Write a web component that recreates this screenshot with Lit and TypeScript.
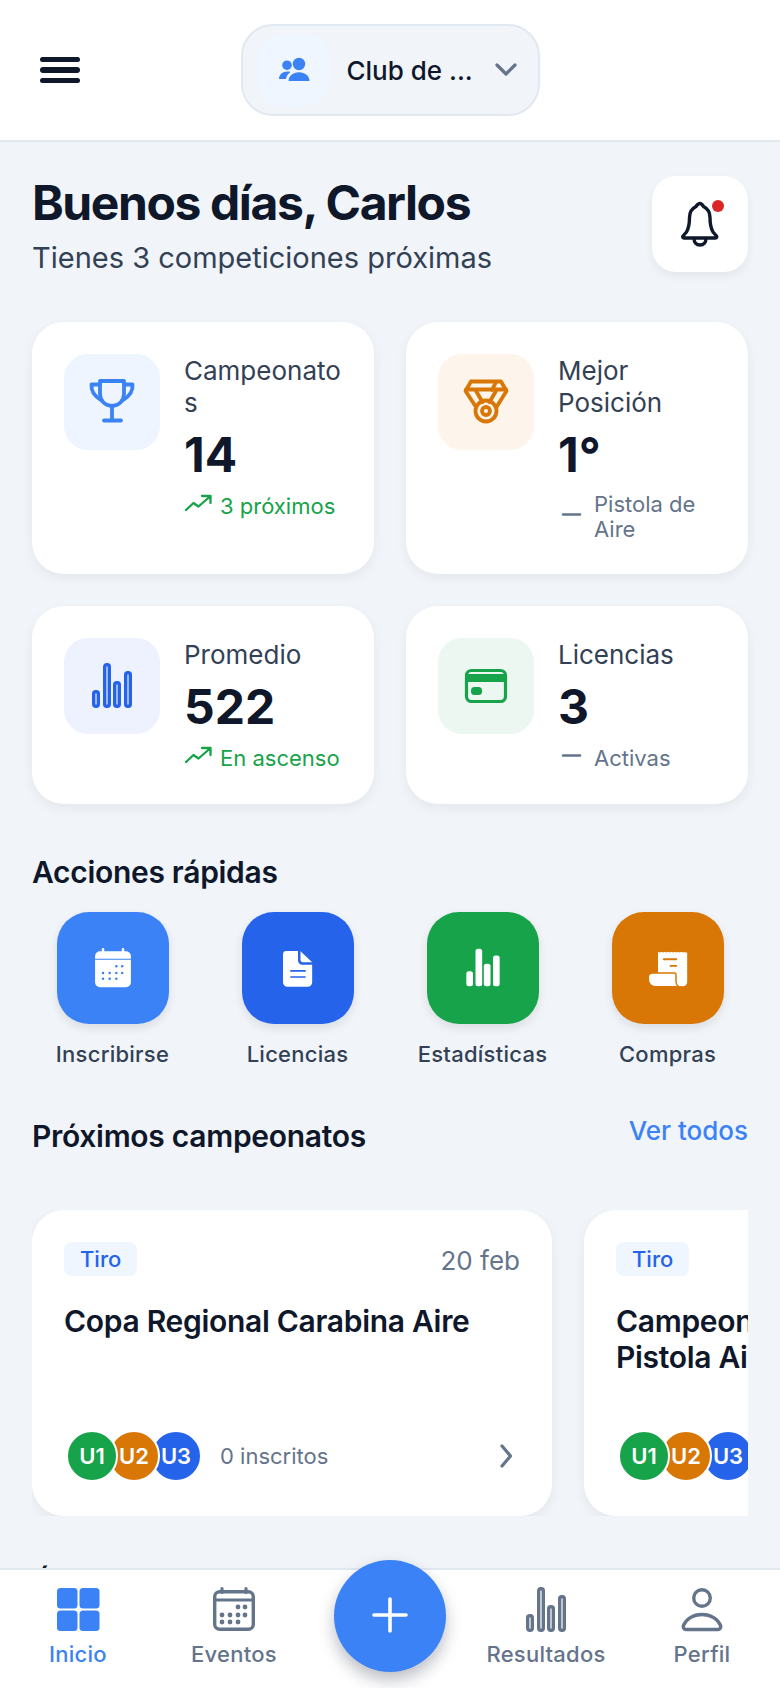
import { LitElement, html, css, svg } from "lit";
import { customElement } from "lit/decorators.js";

const box = (size: number, content: unknown) =>
  html`<svg class="ic" width=${size} height=${size} viewBox="0 0 48 48" aria-hidden="true">${content}</svg>`;

const barRects = [
  [4, 28, 8, 18],
  [15, 1, 8, 45],
  [25, 19, 8, 27],
  [36, 9, 8, 37],
];
const barsLine = (size: number) =>
  box(size, svg`${barRects.map(([x, y, w, h]) => svg`<rect x=${x + 1.7} y=${y + 1.7} width=${w - 3.4} height=${h - 3.4} rx="2" fill="none" stroke="currentColor" stroke-width="3.4"/>`)}`);
const barsFill = (size: number) =>
  box(size, svg`${barRects.map(([x, y, w, h]) => svg`<rect x=${x} y=${y} width=${w} height=${h} rx="3" fill="#fff"/>`)}`);

const calDots = [[28, 21], [35, 21], [12, 29], [20, 29], [28, 29], [35, 29], [12, 36], [20, 36], [28, 36]];
const calLine = (size: number) =>
  box(size, svg`
    <rect x="4.7" y="5.7" width="38.6" height="37.6" rx="5" fill="none" stroke="currentColor" stroke-width="3.4"/>
    <path d="M4 14h40" stroke="currentColor" stroke-width="3"/>
    <path d="M12 2.5v4M36 2.5v4" stroke="currentColor" stroke-width="3.2" stroke-linecap="round"/>
    ${calDots.map(([x, y]) => svg`<circle cx=${x} cy=${y} r="2.4" fill="currentColor"/>`)}`);
const calFill = (size: number) =>
  box(size, svg`
    <rect x="2.5" y="4" width="43" height="43" rx="6" fill="#fff"/>
    <path d="M2.5 13.5h43" stroke="currentColor" stroke-width="1.4"/>
    <path d="M12 1.5v4M36 1.5v4" stroke="#fff" stroke-width="3" stroke-linecap="round"/>
    ${calDots.map(([x, y]) => svg`<circle cx=${x} cy=${y + 1} r="1.5" fill="currentColor"/>`)}`);

const trophy = box(48, svg`<g fill="none" stroke="currentColor" stroke-width="3.8" stroke-linecap="round" stroke-linejoin="round">
  <path d="M12 3h24v13a12 12 0 0 1-24 0z"/>
  <path d="M12 6.5H3.5c-.5 6 2.5 11.500 9.500 15.500M36 6.500h8.500c.5 6-2.500 11.500-9.500 15.500"/>
  <path d="M24 28v13M16 42.500h17"/></g>`);
const medal = box(48, svg`<g fill="none" stroke="currentColor" stroke-width="3.8" stroke-linejoin="round" stroke-linecap="round">
  <path d="M9 3.500h30l5.500 9.500-10 16M14 29 3.500 13 9 3.500"/>
  <path d="M4 11.500h40M34 4l-4 8M14 13l6.500 11M34 13l-6.500 11"/>
  <circle cx="24" cy="33" r="10.500"/><circle cx="24" cy="33" r="4"/></g>`);
const cardIcon = box(48, svg`
  <rect x="4.500" y="8.500" width="39" height="31" rx="5" fill="none" stroke="currentColor" stroke-width="3.2"/>
  <rect x="4" y="12" width="40" height="8" fill="currentColor"/>
  <rect x="9" y="25" width="11" height="8" rx="3.500" fill="currentColor"/>`);
const trend = html`<svg class="ic" width="28" height="28" viewBox="0 0 28 28" aria-hidden="true"><path d="M2 18l7.500-7 5 3.500L26 4.500M18 4h8.500v7" fill="none" stroke="currentColor" stroke-width="2.3" stroke-linecap="round" stroke-linejoin="round"/></svg>`;
const dash = html`<svg class="ic" width="28" height="28" viewBox="0 0 28 28" aria-hidden="true"><path d="M5 11.500h17" stroke="currentColor" stroke-width="2.5" stroke-linecap="round"/></svg>`;
const doc = box(40, svg`
  <path d="M10 3.500h14V15a5 5 0 0 0 5 5h12v21a5.500 5.500 0 0 1-5.500 5.500h-24A5.500 5.500 0 0 1 6 41V7.500a4 4 0 0 1 4-4z" fill="#fff"/>
  <path d="M27 4l14 13H30a3 3 0 0 1-3-3z" fill="#fff"/>
  <path d="M15.500 27.500h17M15.500 34.800h17" stroke="currentColor" stroke-width="2" stroke-linecap="round"/>`);
const receipt = box(40, svg`
  <path d="M12 4.500l2 1.500 2-1.500 2 1.500 2-1.500 2 1.500 2-1.500 2 1.500 2-1.500 2 1.500 2-1.500 2 1.500 2-1.500 2 1.500 2-1.500 2 1.500 2-1.500V41a5 5 0 0 1-10 0V12H12z" fill="#fff"/>
  <path d="M12 5.500h35V41a5 5 0 0 1-10 0v-10H12z" fill="#fff"/>
  <path d="M5 30h27c1 0 1.500.5 1.500 2v8c0 2 1 4.500 2.500 6.500H10c-5 0-9.500-3-9.500-8V34c0-2 2.500-4 4.500-4z" fill="#fff" stroke="currentColor" stroke-width="1.6"/>
  <path d="M19 13.500h15M27 21.500h7" stroke="currentColor" stroke-width="2.2" stroke-linecap="round"/>`);
const grid = box(48, svg`
  <rect x="3" y="2" width="20.500" height="20.500" rx="3.500" fill="currentColor"/>
  <rect x="25.500" y="2" width="20" height="20.500" rx="3.500" fill="currentColor"/>
  <rect x="3" y="24.500" width="20.500" height="20.500" rx="3.500" fill="currentColor"/>
  <rect x="25.500" y="24.500" width="20" height="20.500" rx="3.500" fill="currentColor"/>`);
const person = box(48, svg`<g fill="none" stroke="currentColor" stroke-width="3.4" stroke-linejoin="round">
  <circle cx="24" cy="12" r="8.3"/>
  <path d="M8 43.500h32a2.800 2.800 0 0 0 2.600-3.800C40 33 33 28.500 24 28.500S8 33 5.400 39.700A2.800 2.800 0 0 0 8 43.500z"/></g>`);

type Stat = { label: string; value: string; note: string; up: boolean; tone: string; icon: unknown };
const stats: Stat[] = [
  { label: "Campeonatos", value: "14", note: "3 próximos", up: true, tone: "sky", icon: trophy },
  { label: "Mejor Posición", value: "1°", note: "Pistola de Aire", up: false, tone: "amber", icon: medal },
  { label: "Promedio", value: "522", note: "En ascenso", up: true, tone: "blue", icon: barsLine(48) },
  { label: "Licencias", value: "3", note: "Activas", up: false, tone: "green", icon: cardIcon },
];
const actions = [
  { label: "Inscribirse", tone: "a-sky", icon: calFill(40) },
  { label: "Licencias", tone: "a-blue", icon: doc },
  { label: "Estadísticas", tone: "a-green", icon: barsFill(40) },
  { label: "Compras", tone: "a-amber", icon: receipt },
];
const events = [
  { title: "Copa Regional Carabina Aire", date: "20 feb" },
  { title: "Campeonato Autonómico Pistola Aire", date: "5 mar" },
];
const avatars = [
  { t: "U1", c: "av-green" },
  { t: "U2", c: "av-amber" },
  { t: "U3", c: "av-blue" },
];

@customElement("app-root")
export class AppRoot extends LitElement {
  static styles = css`
    :host { display: block; width: 780px; height: 1688px; font-family: Inter, "Noto Sans", sans-serif; color: #0f172a; background: #f1f5f9; }
    * { box-sizing: border-box; }
    .ic { display: block; flex: none; }
    button { font: inherit; color: inherit; background: none; border: 0; padding: 0; margin: 0; }
    .page { position: relative; height: 1688px; display: flex; flex-direction: column; overflow: hidden; }

    .top { height: 142px; flex: none; background: #fff; border-bottom: 2px solid #e2e8f0; display: grid; grid-template-columns: 1fr auto 1fr; align-items: center; padding: 0 40px; }
    .burger { width: 40px; display: flex; flex-direction: column; gap: 5px; }
    .burger span { display: block; height: 5.5px; border-radius: 3px; background: #0f172a; }
    .club { width: 299px; height: 92px; display: flex; align-items: center; padding: 0 18px 0 15px; gap: 17px; background: #f1f5f9; border: 2px solid #e2e8f0; border-radius: 32px; }
    .club-ic { width: 72px; height: 72px; border-radius: 24px; background: #eff6ff; color: #3b82f6; display: flex; align-items: center; justify-content: center; flex: none; }
    .club-name { flex: 1; font-size: 26px; font-weight: 500; text-align: left; white-space: nowrap; }
    .chev { color: #64748b; }

    main { flex: 1; min-height: 0; overflow: hidden; padding: 32px 32px 0; }
    .hello { display: flex; justify-content: space-between; align-items: flex-start; }
    h1 { margin: 0; font-size: 48px; line-height: 58px; font-weight: 700; letter-spacing: -1.4px; }
    .sub { margin: 8px 0 0; font-size: 29px; line-height: 35px; color: #334155; }
    .bell { position: relative; width: 96px; height: 96px; margin-top: 2px; border-radius: 24px; background: #fff; box-shadow: 0 4px 10px rgba(15, 23, 42, .06); display: flex; align-items: center; justify-content: center; }
    .dot { position: absolute; left: 60px; top: 24px; width: 12px; height: 12px; border-radius: 50%; background: #dc2626; }

    .stats { display: grid; grid-template-columns: 1fr 1fr; gap: 32px; margin-top: 47px; }
    .stat { display: flex; gap: 24px; padding: 32px; border-radius: 32px; background: #fff; box-shadow: 0 4px 12px rgba(15, 23, 42, .06); min-width: 0; }
    .stat-ic { width: 96px; height: 96px; border-radius: 24px; flex: none; display: flex; align-items: center; justify-content: center; }
    .sky { background: #eff5fe; color: #3b82f6; }
    .amber { background: #fdf4eb; color: #d97706; }
    .blue { background: #edf2fe; color: #2563eb; }
    .green { background: #edf7f1; color: #16a34a; }
    .stat-body { min-width: 0; flex: 1; padding-top: 1px; }
    .stat-label { font-size: 26px; line-height: 32px; color: #334155; overflow-wrap: anywhere; }
    .stat-value { font-size: 48px; line-height: 58px; font-weight: 700; margin: 7px 0 8px; }
    .note { display: flex; align-items: center; gap: 8px; font-size: 22px; line-height: 25px; }
    .up { color: #16a34a; }
    .flat { color: #64748b; }

    h2 { margin: 0; font-size: 30px; line-height: 36px; font-weight: 600; letter-spacing: -0.3px; }
    .quick-title { margin-top: 50px; }
    .quick { display: grid; grid-template-columns: repeat(4, 1fr); margin: 22px -12px 0; }
    .act { display: flex; flex-direction: column; align-items: center; gap: 17px; }
    .act-btn { width: 112px; height: 112px; border-radius: 32px; display: flex; align-items: center; justify-content: center; box-shadow: 0 4px 10px rgba(15, 23, 42, .1); }
    .a-sky { background: #3b82f6; color: #3b82f6; }
    .a-blue { background: #2563eb; color: #2563eb; }
    .a-green { background: #16a34a; color: #16a34a; }
    .a-amber { background: #d97706; color: #d97706; }
    .act-label { font-size: 22px; line-height: 26px; font-weight: 500; color: #334155; letter-spacing: 0.25px; }

    .section { display: flex; justify-content: space-between; align-items: flex-start; margin-top: 51px; }
    .more { font-size: 26px; line-height: 32px; font-weight: 500; color: #3b82f6; margin-top: -3px; }
    .events { display: flex; gap: 32px; overflow: hidden; margin-top: 56px; }
    .event { flex: none; width: 520px; height: 306px; padding: 32px; border-radius: 32px; background: #fff; box-shadow: 0 4px 12px rgba(15, 23, 42, .06); display: flex; flex-direction: column; }
    .event-top { display: flex; justify-content: space-between; align-items: flex-start; }
    .badge { height: 34px; padding: 0 16px; border-radius: 8px; background: #eff6ff; color: #2563eb; font-size: 22px; line-height: 34px; font-weight: 500; }
    .date { font-size: 26px; line-height: 34px; color: #64748b; margin-top: 2px; }
    .event-title { margin: 25px 0 0; font-size: 30px; line-height: 36px; font-weight: 600; letter-spacing: -0.3px; }
    .event-foot { margin-top: auto; margin-bottom: 2px; display: flex; align-items: center; }
    .avs { display: flex; padding-left: 2px; }
    .av { position: relative; width: 52px; height: 52px; border-radius: 50%; border: 2px solid #fff; margin-right: -10px; display: flex; align-items: center; justify-content: center; color: #fff; font-size: 22px; font-weight: 600; }
    .av:nth-child(1) { z-index: 3; }
    .av:nth-child(2) { z-index: 2; }
    .av:nth-child(3) { z-index: 1; }
    .av-green { background: #16a34a; }
    .av-amber { background: #d97706; }
    .av-blue { background: #2563eb; }
    .count { margin-left: 28px; flex: 1; font-size: 22px; line-height: 26px; color: #64748b; }
    .go { color: #64748b; }
    .next { margin-top: 49px; }

    .nav { position: relative; flex: none; height: 120px; background: #fff; border-top: 2px solid #e2e8f0; display: grid; grid-template-columns: repeat(5, 1fr); padding-top: 16px; }
    .tab { display: flex; flex-direction: column; align-items: center; gap: 7px; color: #64748b; font-size: 22px; line-height: 26px; font-weight: 500; letter-spacing: 0.25px; }
    .tab.on { color: #3b82f6; }
    .fab { position: absolute; left: 334px; top: -10px; width: 112px; height: 112px; border-radius: 50%; background: #3b82f6; color: #fff; display: flex; align-items: center; justify-content: center; box-shadow: 0 8px 16px rgba(15, 23, 42, .28); }
  `;

  render() {
    return html`<div class="page">
      <header class="top">
        <button class="burger" aria-label="Menú"><span></span><span></span><span></span></button>
        <button class="club">
          <span class="club-ic">
            <svg class="ic" width="36" height="36" viewBox="0 0 36 36" aria-hidden="true" fill="currentColor">
              <circle cx="23" cy="12" r="6.2"/><circle cx="11" cy="13.2" r="4.8"/>
              <path d="M12.500 29c0-5 4.500-8.800 10.500-8.800S33.500 24 33.500 29z"/>
              <path d="M3 27c0-4.500 3.500-7.500 8.500-7.500 1 0 2 .1 3 .4-2.500 1.800-4 4-4.600 7.100z"/>
            </svg>
          </span>
          <span class="club-name">Club de ...</span>
          <svg class="ic chev" width="28" height="28" viewBox="0 0 28 28" aria-hidden="true"><path d="M5 9l9 9 9-9" fill="none" stroke="currentColor" stroke-width="3.2" stroke-linecap="round" stroke-linejoin="round"/></svg>
        </button>
        <span></span>
      </header>

      <main>
        <div class="hello">
          <div>
            <h1>Buenos días, Carlos</h1>
            <p class="sub">Tienes 3 competiciones próximas</p>
          </div>
          <button class="bell" aria-label="Notificaciones">
            <svg class="ic" width="48" height="48" viewBox="0 0 48 48" aria-hidden="true"><path d="M24 3.500c-2 0-3 1.500-4 3-4 2-6.500 6-6.500 11 0 7-1 11-3 14.500l-3.500 4c-.7 1 0 2 1 2h31.500c1 0 1.700-1 1-2l-3.500-4c-2-3.500-3-7.500-3-14.500 0-5-2.500-9-6.500-11-1-1.500-2-3-3.500-3zM18 38.500c0 4 2.500 6.500 6 6.500s6-2.500 6-6.500" fill="none" stroke="#0f172a" stroke-width="3.4" stroke-linejoin="round" stroke-linecap="round"/></svg>
            <span class="dot"></span>
          </button>
        </div>

        <section class="stats">
          ${stats.map(
            (s) => html`<article class="stat">
              <div class="stat-ic ${s.tone}">${s.icon}</div>
              <div class="stat-body">
                <div class="stat-label">${s.label}</div>
                <div class="stat-value">${s.value}</div>
                <div class="note ${s.up ? "up" : "flat"}">${s.up ? trend : dash}<span>${s.note}</span></div>
              </div>
            </article>`
          )}
        </section>

        <h2 class="quick-title">Acciones rápidas</h2>
        <section class="quick">
          ${actions.map(
            (a) => html`<button class="act">
              <span class="act-btn ${a.tone}">${a.icon}</span>
              <span class="act-label">${a.label}</span>
            </button>`
          )}
        </section>

        <div class="section"><h2>Próximos campeonatos</h2><span class="more">Ver todos</span></div>
        <section class="events">
          ${events.map(
            (e) => html`<article class="event">
              <div class="event-top"><span class="badge">Tiro</span><span class="date">${e.date}</span></div>
              <h3 class="event-title">${e.title}</h3>
              <div class="event-foot">
                <div class="avs">${avatars.map((a) => html`<span class="av ${a.c}">${a.t}</span>`)}</div>
                <span class="count">0 inscritos</span>
                <svg class="ic go" width="28" height="28" viewBox="0 0 28 28" aria-hidden="true"><path d="M10 4l8.500 10L10 24" fill="none" stroke="currentColor" stroke-width="3.2" stroke-linecap="round" stroke-linejoin="round"/></svg>
              </div>
            </article>`
          )}
        </section>
        <h2 class="next">Últimos resultados</h2>
      </main>

      <nav class="nav">
        <button class="tab on">${grid}<span>Inicio</span></button>
        <button class="tab">${calLine(48)}<span>Eventos</span></button>
        <span></span>
        <button class="tab">${barsLine(48)}<span>Resultados</span></button>
        <button class="tab">${person}<span>Perfil</span></button>
        <button class="fab" aria-label="Añadir">
          <svg class="ic" width="48" height="48" viewBox="0 0 48 48" aria-hidden="true"><path d="M24 7v32M8 23h32" stroke="currentColor" stroke-width="3.6" stroke-linecap="round"/></svg>
        </button>
      </nav>
    </div>`;
  }
}
